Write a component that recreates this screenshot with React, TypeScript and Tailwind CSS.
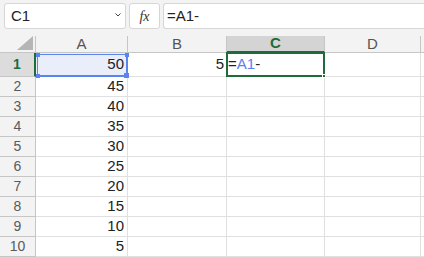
import React from "react";

const rows: { n: number; a: string; b?: string }[] = [
  { n: 1, a: "50", b: "5" },
  { n: 2, a: "45" },
  { n: 3, a: "40" },
  { n: 4, a: "35" },
  { n: 5, a: "30" },
  { n: 6, a: "25" },
  { n: 7, a: "20" },
  { n: 8, a: "15" },
  { n: 9, a: "10" },
  { n: 10, a: "5" },
];

const font = { fontFamily: '"Liberation Sans", Arial, sans-serif' };

export default function App() {
  return (
    <div className="w-[424px] h-[257px] overflow-hidden bg-white" style={font}>
      {/* toolbar */}
      <div className="h-[36px] bg-[#f3f3f3] flex items-start pt-[3px] pl-[4px] gap-[3px]">
        <div className="w-[122px] h-[26px] bg-white border border-[#d6d6d6] rounded-[3px] flex items-center justify-between pl-[6px] pr-[3px]">
          <span className="text-[15px] text-[#222]">C1</span>
          <svg width="8" height="6" viewBox="0 0 8 6" className="mt-[-3px]">
            <path d="M1.5 1.5 L4 4 L6.5 1.5" fill="none" stroke="#444" strokeWidth="1" />
          </svg>
        </div>
        <div className="w-[31px] h-[26px] bg-white border border-[#d6d6d6] rounded-[3px] flex items-center justify-center">
          <span className="text-[14px] text-[#333] italic" style={{ fontFamily: '"Liberation Serif", serif' }}>
            fx
          </span>
        </div>
        <div className="flex-1 h-[26px] bg-white border border-[#d6d6d6] rounded-l-[3px] border-r-0 flex items-center pl-[3px]">
          <span className="text-[15px] text-[#222]">=A1-</span>
        </div>
      </div>

      {/* grid */}
      <div className="grid grid-cols-[36px_92px_99px_98px_96px_1fr] grid-rows-[17px_24px_repeat(9,20px)] text-[#222]">
        {/* header row */}
        <div className="bg-[#f3f3f3] border-r border-b border-[#c6c6c6] flex items-end justify-end pr-[2px] pb-[2px]">
          <svg width="16" height="14" viewBox="0 0 16 14">
            <path d="M16 0 L16 14 L0 14 Z" fill="#b5b5b5" />
          </svg>
        </div>
        <div className="bg-[#f3f3f3] border-r border-b border-[#c6c6c6] flex items-center justify-center text-[15px] text-[#555]">A</div>
        <div className="bg-[#f3f3f3] border-r border-b border-[#c6c6c6] flex items-center justify-center text-[15px] text-[#555]">B</div>
        <div className="bg-[#d4d4d4] border-r border-b-2 border-[#c6c6c6] border-b-[#1f6b3a] flex items-center justify-center text-[15px] font-bold text-[#1f6b3a]">C</div>
        <div className="bg-[#f3f3f3] border-r border-b border-[#c6c6c6] flex items-center justify-center text-[15px] text-[#555]">D</div>
        <div className="bg-[#f3f3f3] border-b border-[#c6c6c6]"></div>

        {rows.map((r) => {
          const sel = r.n === 1;
          return (
            <React.Fragment key={r.n}>
              <div
                className={
                  sel
                    ? "bg-[#dcdcdc] border-r-2 border-r-[#1f6b3a] border-b border-b-[#c6c6c6] flex items-center justify-center text-[14px] font-bold text-[#1f6b3a]"
                    : "bg-[#f3f3f3] border-r border-b border-[#c6c6c6] flex items-center justify-center text-[14px] text-[#5a5a5a]"
                }
              >
                {r.n}
              </div>
              <div
                className={
                  sel
                    ? "relative bg-[#eaeefa] border-r border-b border-[#e0e0e0] flex items-center justify-end pr-[3px] text-[15px]"
                    : "border-r border-b border-[#e0e0e0] flex items-center justify-end pr-[3px] text-[15px]"
                }
              >
                {r.a}
                {sel && (
                  <div className="absolute left-[1px] top-[1px] right-[-1px] bottom-[-1px] border border-[#5b85ee] border-b-2 border-r-2 pointer-events-none">
                    <div className="absolute left-[-2px] top-[-2px] w-[4px] h-[4px] bg-[#5b85ee]" />
                    <div className="absolute right-[-3px] top-[-2px] w-[4px] h-[4px] bg-[#5b85ee]" />
                    <div className="absolute left-[-2px] bottom-[-3px] w-[4px] h-[4px] bg-[#5b85ee]" />
                    <div className="absolute right-[-3px] bottom-[-3px] w-[5px] h-[5px] bg-[#5b85ee]" />
                  </div>
                )}
              </div>
              <div className="border-r border-b border-[#e0e0e0] flex items-center justify-end pr-[2px] text-[15px]">
                {r.b ?? ""}
              </div>
              <div className={sel ? "relative border-r border-b border-[#e0e0e0] flex items-center text-[15px]" : "border-r border-b border-[#e0e0e0]"}>
                {sel && (
                  <>
                    <span className="pl-[1px] relative z-10">
                      =<span className="text-[#5b7ef0]">A1</span>-
                    </span>
                    <div className="absolute left-[-1px] top-[-1px] right-[-1px] bottom-[-1px] border-2 border-[#1f6b3a] pointer-events-none">
                      <div className="absolute right-[-3px] bottom-[-3px] w-[4px] h-[4px] bg-[#1f6b3a] border border-white" />
                    </div>
                  </>
                )}
              </div>
              <div className="border-r border-b border-[#e0e0e0]"></div>
              <div className="border-b border-[#e0e0e0]"></div>
            </React.Fragment>
          );
        })}
      </div>
    </div>
  );
}
